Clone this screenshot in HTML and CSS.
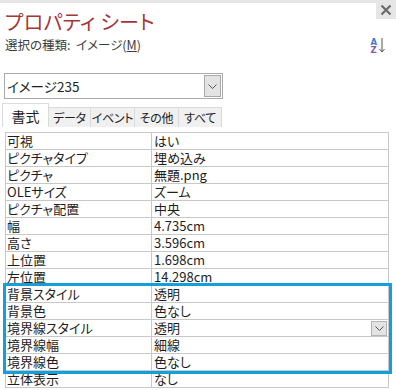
FILE: index.html
```html
<!DOCTYPE HTML>
<html>
<head>
<meta charset="utf-8">
<title>プロパティ シート</title>
<link rel="stylesheet" href="styles.css">
</head>
<body>
<div class="sheet">
  <div class="head">
    <div class="titles">
      <div class="title">プロパティ シート</div>
      <div class="sel">選択の種類:&nbsp; イメージ(<u>M</u>)</div>
    </div>
    <div class="side">
      <div class="close">
        <svg width="12" height="12" viewBox="0 0 12 12"><path d="M1.5 1.5L10.5 10.5M10.5 1.5L1.5 10.5" stroke="#6b6b6b" stroke-width="2.2"/></svg>
      </div>
      <div class="sort">
        <div class="az"><span class="a">A</span><span class="z">Z</span></div>
        <svg width="6" height="15" viewBox="0 0 6 15"><path d="M3 0V14M0.5 11L3 14L5.5 11" stroke="#555" stroke-width="1" fill="none"/></svg>
      </div>
    </div>
  </div>

  <div class="combo">
    <span class="combo-text">イメージ235</span>
    <span class="drop"><svg width="9" height="5" viewBox="0 0 9 5"><path d="M0.5 0.5L4.5 4.5L8.5 0.5" stroke="#555" fill="none"/></svg></span>
  </div>

  <div class="tabs">
    <div class="tab active">書式</div>
    <div class="tab">データ</div>
    <div class="tab">イベント</div>
    <div class="tab">その他</div>
    <div class="tab">すべて</div>
  </div>

  <div class="grid">
    <div class="row"><div class="k">可視</div><div class="v">はい</div></div>
    <div class="row"><div class="k">ピクチャタイプ</div><div class="v">埋め込み</div></div>
    <div class="row"><div class="k">ピクチャ</div><div class="v">無題.png</div></div>
    <div class="row"><div class="k">OLEサイズ</div><div class="v">ズーム</div></div>
    <div class="row"><div class="k">ピクチャ配置</div><div class="v">中央</div></div>
    <div class="row"><div class="k">幅</div><div class="v">4.735cm</div></div>
    <div class="row"><div class="k">高さ</div><div class="v">3.596cm</div></div>
    <div class="row"><div class="k">上位置</div><div class="v">1.698cm</div></div>
    <div class="row"><div class="k">左位置</div><div class="v">14.298cm</div></div>
    <div class="mark">
      <div class="row"><div class="k">背景スタイル</div><div class="v">透明</div></div>
      <div class="row"><div class="k">背景色</div><div class="v">色なし</div></div>
      <div class="row"><div class="k">境界線スタイル</div><div class="v">透明<span class="vdrop"><svg width="9" height="5" viewBox="0 0 9 5"><path d="M0.5 0.5L4.5 4.5L8.5 0.5" stroke="#555" fill="none"/></svg></span></div></div>
      <div class="row"><div class="k">境界線幅</div><div class="v">細線</div></div>
      <div class="row"><div class="k">境界線色</div><div class="v">色なし</div></div>
    </div>
    <div class="row"><div class="k">立体表示</div><div class="v">なし</div></div>
  </div>
</div>
</body>
</html>
```

FILE: styles.css
```css
html, body { margin:0; padding:0; background:#fff; }
body { font-family: "Noto Sans CJK JP", "Noto Sans", sans-serif; font-feature-settings: "palt"; color:#1e1e1e; }
.sheet { width:396px; height:390px; overflow:hidden; }

.head { display:flex; justify-content:space-between; border-top:3px solid #e6e6e6; height:66px; }
.titles { padding:5px 0 0 5px; }
.title { font-size:20px; line-height:28px; color:#a4373a; letter-spacing:0.3px; }
.sel { font-size:12.5px; line-height:17px; color:#3c3c3c; }
.sel u { text-decoration:underline; }

.side { display:flex; flex-direction:column; align-items:flex-end; }
.close { width:20px; height:19px; margin-top:-3px; background:#e6e6e6; display:flex; align-items:center; justify-content:center; }
.sort { display:flex; align-items:flex-start; gap:2px; margin:19px 11px 0 0; }
.az { display:flex; flex-direction:column; font-family:"DejaVu Sans", sans-serif; font-size:8.5px; line-height:8px; font-weight:bold; }
.az .a { color:#3f7fc9; }
.az .z { color:#8b55b5; }

.combo { display:flex; align-items:center; justify-content:space-between; margin:4px 0 0 4px; width:217px; height:24px; border:1px solid #a9a9a9; }
.combo-text { font-size:13.5px; line-height:20px; padding-left:2px; }
.drop { width:15px; height:20px; margin-right:1px; background:#e3e3e3; border:1px solid #a9a9a9; display:flex; align-items:center; justify-content:center; }

.tabs { display:flex; align-items:flex-end; margin:4px 0 0 2px; height:24px; }
.tab { height:19px; line-height:19px; font-size:12px; letter-spacing:-0.3px; white-space:nowrap; text-align:center; background:#f0f0f0; border:1px solid #dadada; border-bottom:none; border-left:none; }
.tab:nth-child(2) { width:41px; }
.tab:nth-child(3) { width:43px; }
.tab:nth-child(4) { width:43px; }
.tab:nth-child(5) { width:42px; }
.tab.active { width:45px; height:23px; line-height:24px; font-size:14px; letter-spacing:0; background:#fff; border-left:1px solid #dadada; }

.grid { margin:5px 7px 0 5px; border-top:1px solid #c8c8c8; border-left:1px solid #c8c8c8; }
.row { display:grid; grid-template-columns:146px 1fr; height:16px; border-bottom:1px solid #c8c8c8; font-size:13px; line-height:16px; }
.k { padding-left:1px; border-right:1px solid #c8c8c8; white-space:nowrap; }
.v { padding-left:2px; border-right:1px solid #c8c8c8; display:flex; justify-content:space-between; }
.vdrop { width:14px; height:13px; margin:1px 1px 0 0; background:#e3e3e3; border:1px solid #b4b4b4; display:flex; align-items:center; justify-content:center; }
.mark { outline:3px solid #12a0dc; position:relative; z-index:1; }
```
